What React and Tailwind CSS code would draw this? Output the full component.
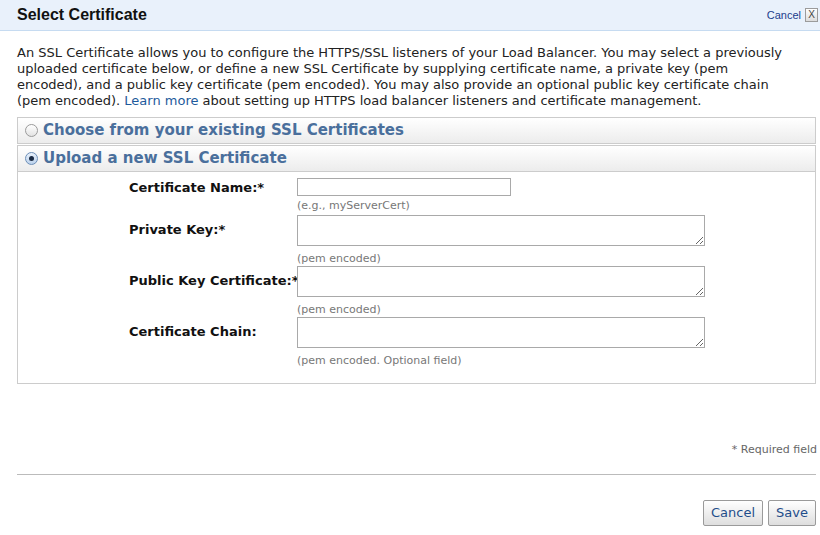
import React from 'react';

const Field = ({ label, hint, textarea }) => (
  <div className="grid grid-cols-[168px_1fr]">
    <div className={`flex items-center whitespace-nowrap text-[13px] font-bold text-[#111] ${textarea ? 'pb-[20px]' : 'pb-[17px]'}`}>{label}</div>
    <div>
      {textarea ? (
        <textarea className="block w-[408px] h-[31px] border border-[#a9a9a9] bg-white resize-y" />
      ) : (
        <input type="text" className="block w-[214px] h-[18px] border border-[#a9a9a9] bg-white" />
      )}
      <div className={`text-[11px] text-[#777] leading-[14px] ${textarea ? 'pt-[6px]' : 'pt-[3px]'}`}>{hint}</div>
    </div>
  </div>
);

const AccordionHeader = ({ label, checked }) => (
  <div className="flex items-center gap-[5px] h-[27px] pl-[7px] border border-[#cccccc] bg-gradient-to-b from-white to-[#ececec]">
    <span className={`flex items-center justify-center w-[13px] h-[13px] rounded-full border ${checked ? 'border-[#6d8fb8] bg-gradient-to-b from-[#e9f1fb] to-[#bcd2ec]' : 'border-[#9a9a9a] bg-gradient-to-b from-white to-[#e3e3e3]'}`}>
      {checked && <span className="w-[5px] h-[5px] rounded-full bg-[#1b2b44]" />}
    </span>
    <span className="text-[15px] font-bold text-[#4a6f9c]">{label}</span>
  </div>
);

export default function App() {
  return (
    <div className="w-[820px] h-[535px] bg-white overflow-hidden font-['Verdana','DejaVu_Sans',sans-serif] text-[#222]">
      <div className="flex items-center justify-between h-[31px] bg-[#e9f1fb] border-b border-[#c6dbf1] pl-[17px] pr-[2px]">
        <h1 className="text-[16px] font-bold text-[#111] font-['Liberation_Sans',Arial,sans-serif]">Select Certificate</h1>
        <div className="flex items-center gap-[4px]">
          <span className="text-[11px] text-[#1c3d8c] font-['Liberation_Sans_Narrow','Liberation_Sans',sans-serif]">Cancel</span>
          <span className="flex items-center justify-center w-[13px] h-[14px] border border-[#9b9b9b] bg-gradient-to-b from-white to-[#dcdcdc] text-[10px] leading-none text-[#444] font-['Liberation_Sans',sans-serif]">X</span>
        </div>
      </div>

      <div className="px-[17px]">
        <p className="text-[13px] leading-[16px] pt-[14px] text-[#222] whitespace-nowrap">
          An SSL Certificate allows you to configure the HTTPS/SSL listeners of your Load Balancer. You may select a previously<br />
          uploaded certificate below, or define a new SSL Certificate by supplying certificate name, a private key (pem<br />
          encoded), and a public key certificate (pem encoded). You may also provide an optional public key certificate chain<br />
          (pem encoded). <span className="text-[#1e5a9c]">Learn more</span> about setting up HTTPS load balancer listeners and certificate management.
        </p>

        <div className="mt-[8px] w-[799px]">
          <AccordionHeader label="Choose from your existing SSL Certificates" />
          <div className="mt-[1px]">
            <AccordionHeader label="Upload a new SSL Certificate" checked />
          </div>
          <div className="border border-t-0 border-[#cccccc] pl-[111px] pt-[6px] pb-[15px]">
            <Field label="Certificate Name:*" hint="(e.g., myServerCert)" />
            <Field label="Private Key:*" hint="(pem encoded)" textarea />
            <Field label="Public Key Certificate:*" hint="(pem encoded)" textarea />
            <Field label="Certificate Chain:" hint="(pem encoded. Optional field)" textarea />
          </div>
        </div>

        <div className="text-right text-[11px] leading-[13px] text-[#666] mt-[59px] w-[800px]">* Required field</div>
        <div className="mt-[18px] border-t border-[#bbbbbb] w-[799px]" />
        <div className="flex justify-end gap-[5px] mt-[25px] w-[799px]">
          <button className="h-[26px] px-[7px] border border-[#9a9a9a] rounded-[2px] bg-gradient-to-b from-white to-[#dedede] text-[13px] text-[#1f4d8a]">Cancel</button>
          <button className="h-[26px] px-[7px] border border-[#9a9a9a] rounded-[2px] bg-gradient-to-b from-white to-[#dedede] text-[13px] text-[#1f4d8a]">Save</button>
        </div>
      </div>
    </div>
  );
}
